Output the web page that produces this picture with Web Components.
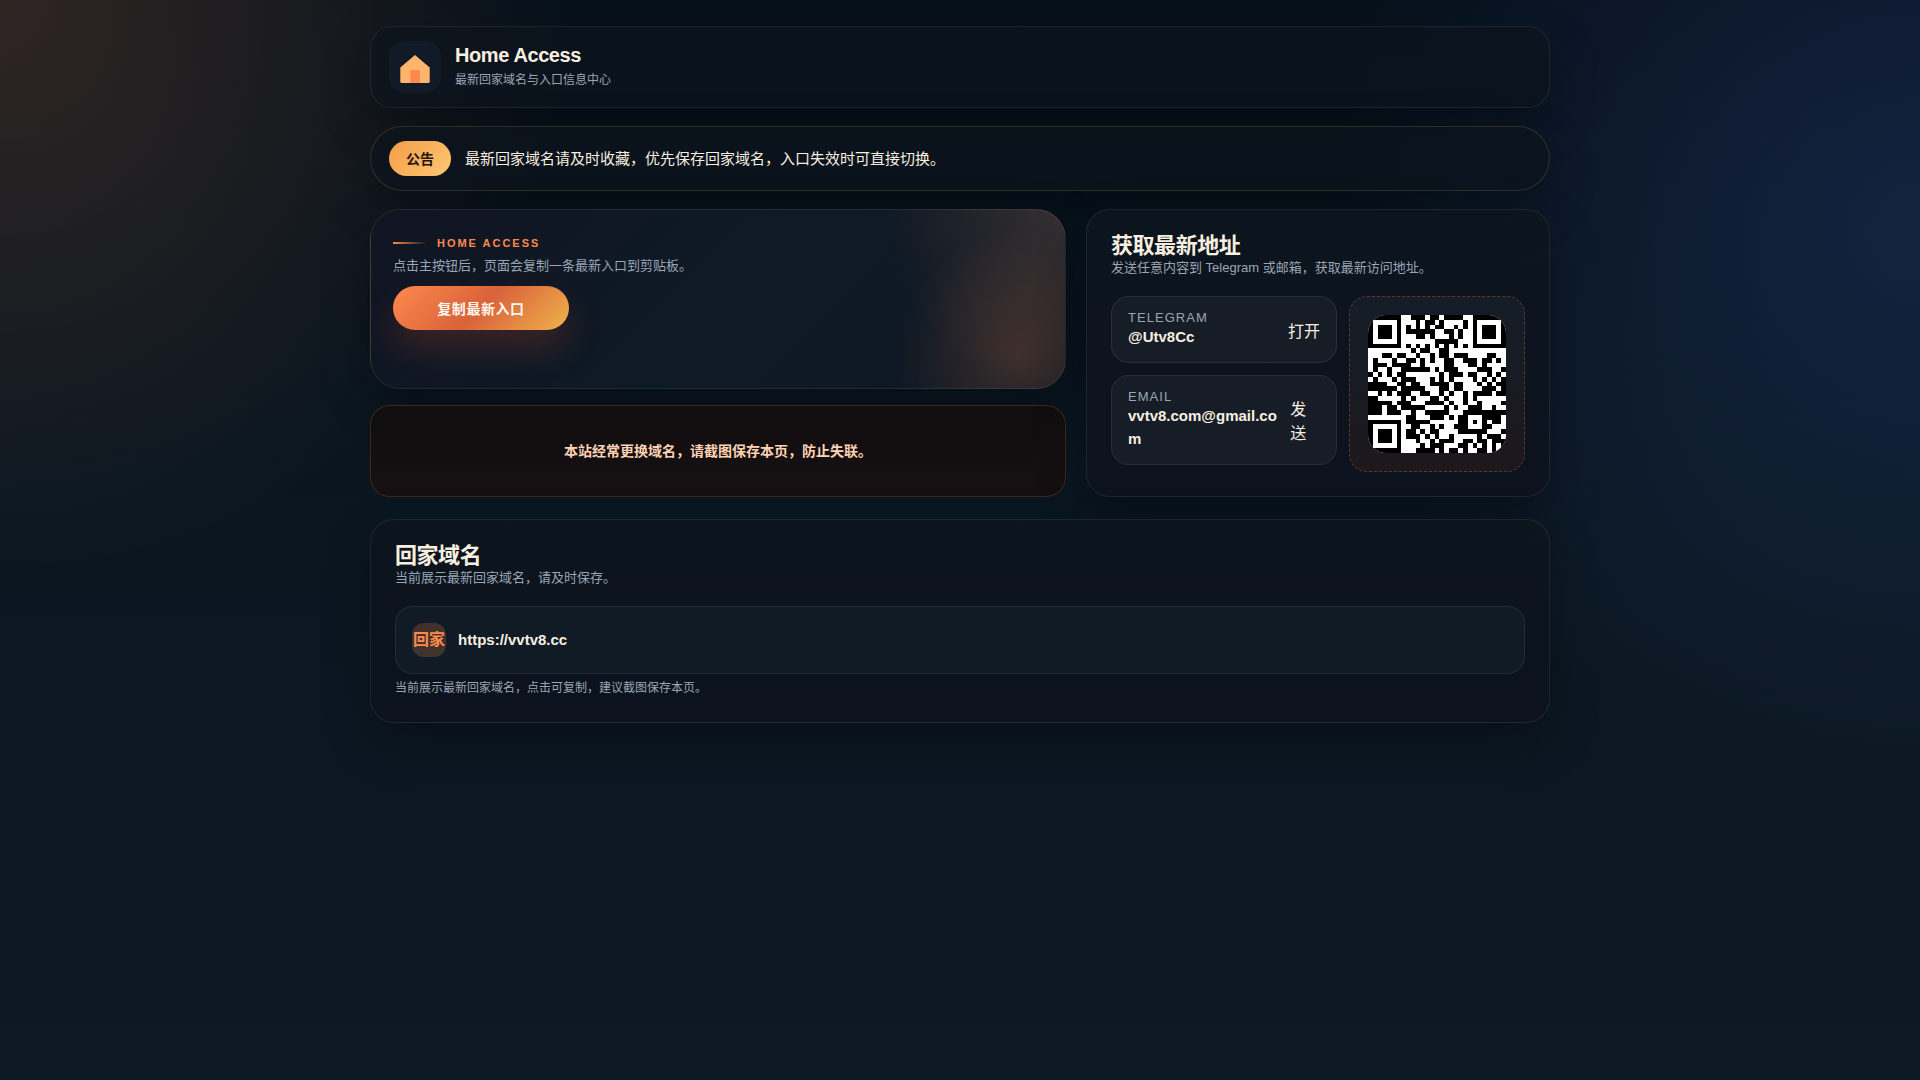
<!DOCTYPE html>
<html lang="zh-CN">
<head>
<meta charset="utf-8">
<meta name="viewport" content="width=device-width, initial-scale=1">
<title>Home Access</title>
<style>
  :root {
    --text: #f8efe0;
    --muted: #9aa6b5;
    --orange: #ff8a4c;
    --line: rgba(255, 255, 255, .08);
    --shadow: 0 18px 48px rgba(0, 0, 0, .3);
    --cjk: "Noto Sans CJK SC", "Liberation Sans", sans-serif;
  }
  html { min-height: 100%; background: #0c1722; }
  body {
    margin: 0;
    min-height: 100vh;
    color: var(--text);
    font: 16px/1.5 "Liberation Sans", "Noto Sans CJK SC", sans-serif;
    background:
      radial-gradient(circle at 0 0, rgba(255, 138, 76, .17), transparent 26%),
      radial-gradient(circle at 100% 20%, rgba(76, 104, 220, .18), transparent 28%),
      linear-gradient(180deg, #06111b 0%, #0a1721 50%, #0d1924 100%);
  }
</style>
</head>
<body>
<home-page></home-page>

<template id="t-page">
  <style>
    :host { display: block; box-sizing: border-box; max-width: 1180px; margin: 0 auto; padding: 26px 0; }
    .stack { display: flex; flex-direction: column; gap: 18px; }
    .cols { display: grid; grid-template-columns: 3fr 2fr; gap: 20px; }
    .left { display: flex; flex-direction: column; gap: 16px; }
    .left warn-note { flex: 1; }
    .contact { display: grid; grid-template-columns: minmax(0, 1fr) 176px; gap: 12px; align-items: start; }
    .items { display: flex; flex-direction: column; gap: 12px; }
    .last { margin-top: 4px; }
    .tip { margin: 4px 0 0; font-size: 12px; line-height: 20px; color: var(--muted); }
  </style>
  <div class="stack">
    <site-header heading="Home Access">最新回家域名与入口信息中心</site-header>
    <notice-bar tag="公告">最新回家域名请及时收藏，优先保存回家域名，入口失效时可直接切换。</notice-bar>
    <main class="cols">
      <div class="left">
        <hero-card kicker="HOME ACCESS" action="复制最新入口">点击主按钮后，页面会复制一条最新入口到剪贴板。</hero-card>
        <warn-note>本站经常更换域名，请截图保存本页，防止失联。</warn-note>
      </div>
      <panel-card heading="获取最新地址" sub="发送任意内容到 Telegram 或邮箱，获取最新访问地址。">
        <div class="contact">
          <div class="items">
            <contact-item href="https://t.me/Utv8Cc" label="TELEGRAM" value="@Utv8Cc">打开</contact-item>
            <contact-item href="mailto:vvtv8.com@gmail.com" label="EMAIL" value="vvtv8.com@gmail.com">发送</contact-item>
          </div>
          <qr-code value="https://vvtv8.cc"></qr-code>
        </div>
      </panel-card>
    </main>
    <panel-card class="last" heading="回家域名" sub="当前展示最新回家域名，请及时保存。">
      <domain-row tag="回家">https://vvtv8.cc</domain-row>
      <p class="tip">当前展示最新回家域名，点击可复制，建议截图保存本页。</p>
    </panel-card>
  </div>
</template>

<template id="t-header">
  <style>
    :host { display: block; border: 1px solid var(--line); border-radius: 22px; background: rgba(13, 19, 28, .72); box-shadow: var(--shadow); }
    header { display: flex; align-items: center; gap: 14px; padding: 14px 18px; }
    svg { display: block; width: 52px; height: 52px; flex: none; }
    h1 { margin: 0; font-size: 20px; line-height: 26px; letter-spacing: -.02em; }
    p { margin: 0; font-size: 12px; line-height: 24px; color: var(--muted); }
  </style>
  <header>
    <svg viewBox="0 0 52 52" aria-hidden="true">
      <rect width="52" height="52" rx="16" fill="#111b27"/>
      <path d="M26 14 40.7 26.5V40.5Q40.7 42 39.2 42H12.8Q11.3 42 11.3 40.5V26.5Z" fill="#ffb56b"/>
      <path d="M21.2 29h9.8V42h-9.8z" fill="#ff8a4c"/>
    </svg>
    <div><h1></h1><p><slot></slot></p></div>
  </header>
</template>

<template id="t-notice">
  <style>
    :host { display: flex; align-items: center; gap: 14px; padding: 14px 18px; border: 1px solid rgba(255, 181, 107, .16); border-radius: 999px; background: rgba(13, 19, 28, .72); box-shadow: var(--shadow); font-family: var(--cjk); font-size: 15px; }
    b { flex: none; padding: 7px 17px; border-radius: 999px; font-size: 14px; line-height: 21px; color: #24160c; background: linear-gradient(135deg, #f49d48, #ffc772); }
  </style>
  <b></b><span><slot></slot></span>
</template>

<template id="t-hero">
  <style>
    :host { display: block; box-sizing: border-box; min-height: 180px; padding: 22px; border: 1px solid var(--line); border-radius: 30px; box-shadow: var(--shadow);
      background:
        radial-gradient(circle at 93% 81%, rgba(255, 138, 76, .18), transparent 120px),
        radial-gradient(circle at 100% 0, rgba(255, 160, 110, .17), transparent 180px),
        linear-gradient(135deg, #101522, #0e1a25 50%, #0f1824); }
    .kicker { display: flex; align-items: center; gap: 10px; font-size: 11px; line-height: 22px; font-weight: 700; letter-spacing: .18em; color: var(--orange); }
    .kicker::before { content: ""; width: 34px; height: 2px; background: linear-gradient(90deg, var(--orange), transparent); }
    p { margin: 0 0 8px; font-size: 13px; line-height: 24px; color: var(--muted); }
    button { display: block; min-width: 176px; height: 44px; padding: 0 40px; border: 0; border-radius: 999px; font: 700 14px/20px var(--cjk); letter-spacing: .04em; color: #fff8ef; background: linear-gradient(135deg, #ff8a4c, #d9623b 50%, #f0b44c); box-shadow: 0 18px 34px rgba(217, 78, 49, .22); cursor: pointer; }
  </style>
  <div class="kicker"></div>
  <p><slot></slot></p>
  <button type="button"></button>
</template>

<template id="t-warn">
  <style>
    :host { display: flex; align-items: center; justify-content: center; padding: 16px; border: 1px solid rgba(255, 138, 76, .18); border-radius: 20px; background: linear-gradient(180deg, #100e10, #161011); font-size: 14px; font-weight: 700; color: #ffd2b3; }
  </style>
  <slot></slot>
</template>

<template id="t-panel">
  <style>
    :host { display: block; padding: 24px; border: 1px solid var(--line); border-radius: 24px; background: linear-gradient(180deg, rgba(13, 21, 30, .9), #0d131e); box-shadow: var(--shadow); }
    h2 { margin: 0; font-size: 22px; line-height: 24px; letter-spacing: -.02em; }
    .sub { margin: 0 0 18px; font-size: 13px; line-height: 20px; color: var(--muted); }
  </style>
  <h2></h2><p class="sub"></p><slot></slot>
</template>

<template id="t-contact">
  <style>
    :host { display: block; }
    a { display: flex; align-items: center; justify-content: space-between; gap: 12px; padding: 14px 16px; border: 1px solid var(--line); border-radius: 18px; background: #161d26; color: inherit; text-decoration: none; }
    small { display: block; font-size: 13px; line-height: 14px; letter-spacing: .08em; color: var(--muted); }
    strong { display: block; font-size: 15px; line-height: 23px; overflow-wrap: anywhere; }
    span { font-family: var(--cjk); }
  </style>
  <a><div><small></small><strong></strong></div><span><slot></slot></span></a>
</template>

<template id="t-qr">
  <style>
    :host { display: block; padding: 18px; border: 1px dashed rgba(255, 138, 76, .28); border-radius: 18px; background: linear-gradient(180deg, #141d28, #1d181c); }
    svg { display: block; width: 100%; border-radius: 18px; background: #fff; }
  </style>
  <svg viewBox="0 0 29 29" role="img" shape-rendering="crispEdges"><path/></svg>
</template>

<template id="t-domain">
  <style>
    :host { display: block; }
    button { display: flex; align-items: center; gap: 12px; width: 100%; padding: 16px; border: 1px solid var(--line); border-radius: 18px; background: #111b26; color: inherit; font: 700 15px/22px "Liberation Sans", "Noto Sans CJK SC", sans-serif; cursor: pointer; }
    i { display: flex; align-items: center; justify-content: center; width: 34px; height: 34px; border-radius: 12px; font-style: normal; font-size: 16px; color: var(--orange); background: linear-gradient(180deg, #432f2c, #3e342c); }
  </style>
  <button type="button"><i></i><span><slot></slot></span></button>
</template>

<script>
  // Clones the template into an open shadow root and copies attributes into its parts.
  function define(name, template, parts = {}, after) {
    customElements.define(name, class extends HTMLElement {
      constructor() {
        super();
        this.attachShadow({ mode: "open" })
          .append(document.getElementById(template).content.cloneNode(true));
      }
      connectedCallback() {
        for (const [attr, selector] of Object.entries(parts)) {
          this.shadowRoot.querySelector(selector).textContent = this.getAttribute(attr) || "";
        }
        if (after) after(this, this.shadowRoot);
      }
    });
  }

  // QR encoder: version 3, error correction H, byte mode, mask 6.
  function qrMatrix(text) {
    const N = 29, DATA = 26, BLOCK = 13, EC = 22;
    const bytes = [...new TextEncoder().encode(text)];
    let bits = "0100" + bytes.length.toString(2).padStart(8, "0") +
      bytes.map(b => b.toString(2).padStart(8, "0")).join("");
    bits += "0".repeat(Math.min(4, DATA * 8 - bits.length));
    while (bits.length % 8) bits += "0";
    const data = bits.match(/.{8}/g).map(b => parseInt(b, 2));
    for (let i = 0; data.length < DATA; i++) data.push(i % 2 ? 0x11 : 0xec);

    const mul = (a, b) => {
      let r = 0;
      for (let i = 7; i >= 0; i--) {
        r = (r << 1) ^ ((r >>> 7) * 0x11d);
        r ^= ((b >>> i) & 1) * a;
      }
      return r;
    };
    const gen = new Array(EC).fill(0);
    gen[EC - 1] = 1;
    for (let i = 0, root = 1; i < EC; i++, root = mul(root, 2)) {
      for (let j = 0; j < EC; j++) {
        gen[j] = mul(gen[j], root) ^ (j + 1 < EC ? gen[j + 1] : 0);
      }
    }
    const remainder = block => {
      const r = new Array(EC).fill(0);
      for (const b of block) {
        const f = b ^ r.shift();
        r.push(0);
        gen.forEach((g, i) => { r[i] ^= mul(g, f); });
      }
      return r;
    };
    const blocks = [data.slice(0, BLOCK), data.slice(BLOCK)];
    const ecc = blocks.map(remainder);
    const words = [];
    for (let i = 0; i < BLOCK; i++) words.push(blocks[0][i], blocks[1][i]);
    for (let i = 0; i < EC; i++) words.push(ecc[0][i], ecc[1][i]);

    const m = Array.from({ length: N }, () => new Array(N).fill(null));
    const finder = (cx, cy) => {
      for (let y = -4; y <= 4; y++) for (let x = -4; x <= 4; x++) {
        const d = Math.max(Math.abs(x), Math.abs(y));
        if (m[cy + y] && cx + x >= 0 && cx + x < N) m[cy + y][cx + x] = d !== 2 && d !== 4;
      }
    };
    for (let i = 0; i < N; i++) m[6][i] = m[i][6] = i % 2 === 0;
    finder(3, 3); finder(N - 4, 3); finder(3, N - 4);
    for (let y = -2; y <= 2; y++) for (let x = -2; x <= 2; x++) {
      m[22 + y][22 + x] = Math.max(Math.abs(x), Math.abs(y)) !== 1;
    }
    const format = [..."000110100001100"].map(c => c === "1");
    const first = [[0, 8], [1, 8], [2, 8], [3, 8], [4, 8], [5, 8], [7, 8], [8, 8], [8, 7], [8, 5], [8, 4], [8, 3], [8, 2], [8, 1], [8, 0]];
    format.forEach((bit, i) => {
      m[first[i][1]][first[i][0]] = bit;
      if (i < 7) m[N - 1 - i][8] = bit; else m[8][N - 15 + i] = bit;
    });
    m[N - 8][8] = true;

    let k = 0;
    for (let right = N - 1; right >= 1; right -= 2) {
      if (right === 6) right = 5;
      for (let v = 0; v < N; v++) for (let j = 0; j < 2; j++) {
        const x = right - j;
        const y = ((right + 1) & 2) === 0 ? N - 1 - v : v;
        if (m[y][x] !== null) continue;
        const bit = k < words.length * 8 && (words[k >> 3] >> (7 - (k & 7)) & 1) === 1;
        k++;
        m[y][x] = bit !== (((x * y) % 2 + (x * y) % 3) % 2 === 0);
      }
    }
    return m;
  }

  define("site-header", "t-header", { heading: "h1" });
  define("notice-bar", "t-notice", { tag: "b" });
  define("hero-card", "t-hero", { kicker: ".kicker", action: "button" });
  define("warn-note", "t-warn");
  define("panel-card", "t-panel", { heading: "h2", sub: ".sub" });
  define("contact-item", "t-contact", { label: "small", value: "strong" }, (el, root) => {
    root.querySelector("a").href = el.getAttribute("href");
  });
  define("qr-code", "t-qr", {}, (el, root) => {
    const path = qrMatrix(el.getAttribute("value"))
      .map((row, y) => row.map((on, x) => on ? `M${x} ${y}h1v1h-1z` : "").join("")).join("");
    root.querySelector("path").setAttribute("d", path);
    root.querySelector("svg").setAttribute("aria-label", el.getAttribute("value"));
  });
  define("domain-row", "t-domain", { tag: "i" });
  define("home-page", "t-page");
</script>
</body>
</html>
